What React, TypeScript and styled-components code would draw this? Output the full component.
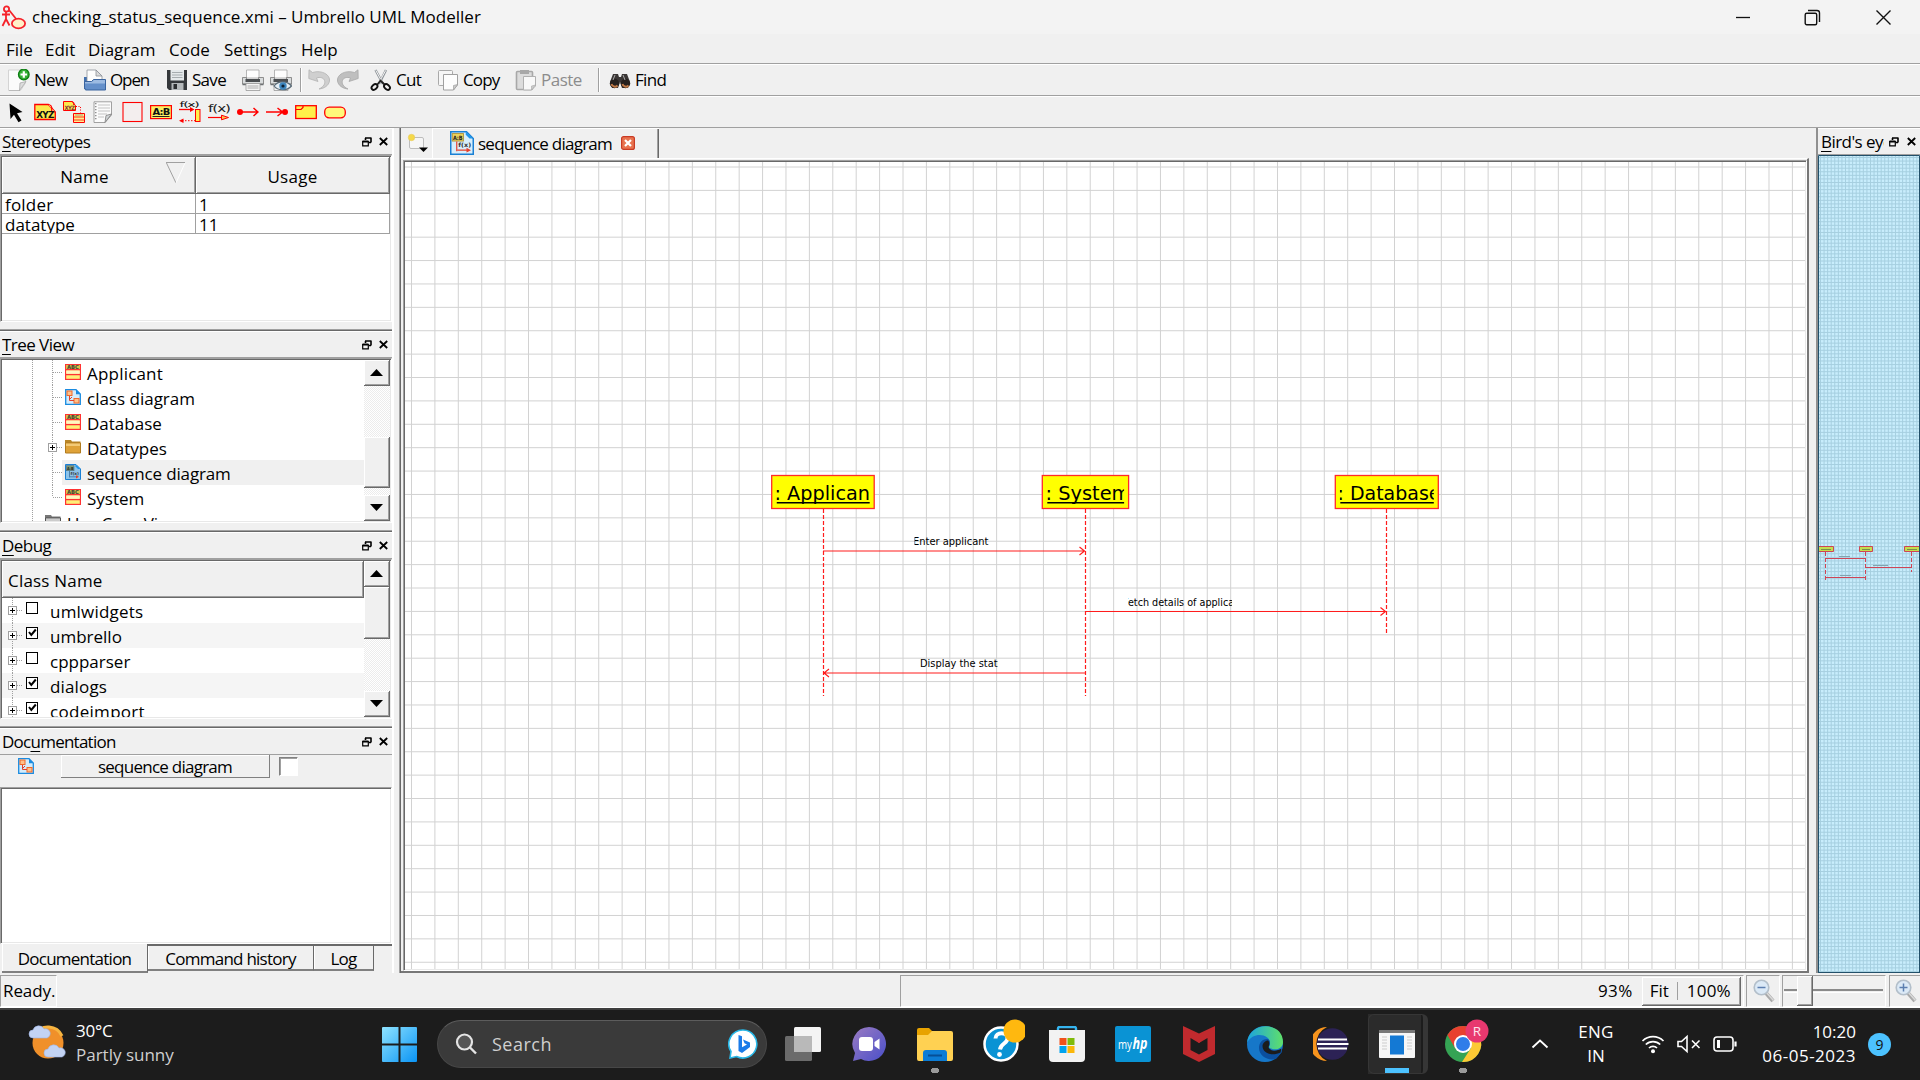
import React from 'react';
import styled, { createGlobalStyle } from 'styled-components';

const Global = createGlobalStyle`
  * { box-sizing: border-box; }
  body { margin: 0; background: #f0f0f0; overflow: hidden; }
  svg { display: block; flex: none; }
`;

const UI = `'Open Sans', 'Noto Sans', 'Liberation Sans', sans-serif`;
const TAHOMA = `'DejaVu Sans Condensed', 'DejaVu Sans', sans-serif`;

const Desktop = styled.div`
  width: 1920px; height: 1080px; display: flex; flex-direction: column;
  font-family: ${UI}; font-size: 17px; line-height: 22px; color: #000;
  background: #f0f0f0; white-space: nowrap; overflow: hidden;
`;
const Label = styled.span<{ ls?: number; size?: number; color?: string }>`
  letter-spacing: ${p => p.ls ?? 0}px;
  font-size: ${p => p.size ?? 17}px;
  color: ${p => p.color ?? 'inherit'};
`;

/* ---------- window chrome ---------- */
const TitleBar = styled.header`
  height: 34px; flex: none; display: flex; align-items: center; background: #f3f3f3; padding-left: 1px;
`;
const TitleText = styled.div`flex: 1; padding-left: 6px;`;
const WinButtons = styled.div`display: flex; gap: 54px; padding-right: 28px;`;
const MenuBar = styled.nav`
  height: 30px; flex: none; display: flex; align-items: center; padding: 2px 0 0 6px;
  border-bottom: 1px solid #a0a0a0;
`;
const MenuItem = styled.div<{ w: number }>`width: ${p => p.w}px;`;
const ToolBar = styled.div`
  height: 32px; flex: none; display: flex; align-items: center; padding-left: 8px;
  border-top: 1px solid #fff; border-bottom: 1px solid #a0a0a0;
`;
const Tool = styled.div<{ w: number; off?: boolean; ls?: number }>`
  width: ${p => p.w}px; flex: none; display: flex; align-items: center; gap: 4px;
  letter-spacing: ${p => p.ls ?? -.7}px;
  color: ${p => (p.off ? '#8c8c8c' : '#000')};
`;
const ToolSep = styled.i<{ w: number }>`
  width: ${p => p.w}px; height: 24px; border-left: 1px solid #a0a0a0; box-shadow: inset 1px 0 #fff;
`;

/* ---------- docks ---------- */
const Body = styled.div`height: 845px; flex: none; display: flex;`;
const LeftDock = styled.aside`width: 392px; flex: none; display: flex; flex-direction: column;`;
const Splitter = styled.i<{ w: number }>`width: ${p => p.w}px; flex: none; border-left: 2px solid #fff;`;
const Panel = styled.section<{ h: number }>`
  height: ${p => p.h}px; flex: none; display: flex; flex-direction: column;
  box-shadow: inset 0 -1px #696969, inset 0 -2px #a0a0a0;
`;
const PanelTitle = styled.div`
  height: 27px; flex: none; display: flex; align-items: center; padding: 1px 4px 0 2px; letter-spacing: -.55px;
  border-bottom: 1px solid #a0a0a0; box-shadow: inset 0 1px #fff;
  span { flex: 1; overflow: hidden; }
  u { text-underline-offset: 3px; text-decoration-thickness: 1px; }
`;
const Sunken = styled.div<{ h: number }>`
  height: ${p => p.h}px; flex: none; background: #fff; padding: 1px; display: flex; overflow: hidden;
  border: 1px solid; border-color: #a0a0a0 #fff #fff #a0a0a0;
  box-shadow: inset 1px 1px #696969, inset -1px -1px #e8e8e8;
`;
const Column = styled.div`flex: 1; min-width: 0; overflow: hidden;`;

const TableRow = styled.div<{ head?: boolean }>`
  display: grid; grid-template-columns: 194px 194px; height: ${p => (p.head ? 37 : 20)}px;
`;
const Th = styled.div`
  background: #f0f0f0; display: flex; align-items: center; justify-content: center; position: relative;
  border-right: 1px solid #696969; border-bottom: 1px solid #696969;
  box-shadow: inset 1px 1px #fff, inset -1px -1px #a0a0a0; padding-top: 3px;
`;
const SortMark = styled.div`position: absolute; right: 9px; top: 5px;`;
const Td = styled.div`
  border-right: 1px solid #a0a0a0; border-bottom: 1px solid #a0a0a0; padding-left: 3px; overflow: hidden;
`;

const TreeList = styled.div`
  padding-left: 30px; height: 161px;
  background-image: repeating-linear-gradient(#a0a0a0 0 1px, transparent 1px 2px);
  background-size: 1px 100%; background-position: 30px 0; background-repeat: no-repeat;
`;
const TreeRow = styled.div<{ selected?: boolean; shift?: boolean }>`
  height: 25px; margin-left: ${p => (p.shift ? 11 : 16)}px; display: flex; align-items: center;
  background: linear-gradient(90deg, #fff 14px, ${p => (p.selected ? '#f0f0f0' : '#fff')} 14px);
  span { padding-top: 2px; }
`;
const Guide = styled.div`width: 15px; flex: none; align-self: stretch;`;
const TreeIcon = styled.div`width: 24px; flex: none; padding: 0 0 1px 2px;`;

const DebugHead = styled.div`
  height: 37px; background: #f0f0f0; padding: 9px 0 0 6px;
  border-right: 1px solid #696969; border-bottom: 1px solid #696969;
  box-shadow: inset 1px 1px #fff, inset -1px -1px #a0a0a0;
`;
const DebugRow = styled.div<{ alt: boolean }>`
  height: 25px; display: flex; background: ${p => (p.alt ? '#f5f5f5' : '#fff')};
  line-height: 28px; padding-left: 6px;
`;

const Bar = styled.div`
  width: 26px; flex: none; display: flex; flex-direction: column;
  background: repeating-conic-gradient(#fff 0 25%, #ececec 0 50%) 0 0 / 2px 2px;
`;
const BarPart = styled.div<{ h: number; gap?: number }>`
  height: ${p => p.h}px; margin-top: ${p => p.gap ?? 0}px; flex: none; background: #f0f0f0;
  display: flex; align-items: center; justify-content: center;
  border-right: 1px solid #696969; border-bottom: 1px solid #696969;
  box-shadow: inset 1px 1px #fff, inset -1px -1px #a0a0a0;
`;

const DocHead = styled.div`height: 32px; flex: none; display: flex; padding-left: 18px;`;
const DocIcon = styled.div`width: 43px; padding-top: 3px;`;
const DocName = styled.div`
  width: 209px; height: 23px; text-align: center; line-height: 23px; letter-spacing: -.75px;
  border-right: 1px solid #808080; border-bottom: 1px solid #808080; box-shadow: inset 1px 1px #fff;
`;
const DocCheck = styled.i`
  margin: 2px 0 0 9px; width: 19px; height: 19px; background: #fff;
  border: 1px solid; border-color: #808080 #fff #fff #808080; box-shadow: inset 1px 1px #a0a0a0;
`;
const DockTabs = styled.div`
  flex: 1; display: flex; align-items: flex-start; padding-left: 2px; letter-spacing: -.75px;
`;
const DockTab = styled.div<{ w: number; on?: boolean }>`
  width: ${p => p.w}px; height: ${p => (p.on ? 29 : 27)}px; text-align: center;
  line-height: ${p => (p.on ? 29 : 25)}px;
  border-right: 1px solid #696969; border-bottom: 2px solid #808080;
  border-top: ${p => (p.on ? 0 : 2)}px solid #696969;
  box-shadow: inset 1px 0 #fff;
`;
const DockTabRest = styled.i`flex: 1; height: 2px; background: #696969;`;

/* ---------- document area ---------- */
const Main = styled.main`
  width: 1410px; flex: none; display: flex; flex-direction: column;
  box-shadow: inset 1px 0 #a0a0a0, inset 2px 0 #696969; padding-left: 2px;
`;
const DocTabs = styled.div`height: 30px; flex: none; display: flex; align-items: center;`;
const NewTab = styled.div`width: 31px; padding-left: 6px;`;
const DocTab = styled.div`
  width: 227px; height: 30px; display: flex; align-items: center; padding: 0 0 0 18px;
  box-shadow: inset 1px 1px #fff, inset -1px 0 #696969, inset -2px 0 #a0a0a0;
`;
const TabText = styled.div`width: 147px; padding: 1px 0 0 4px; letter-spacing: -.75px;`;
const Pane = styled.div`
  flex: 1; padding: 1px 0 0 2px; border-top: 1px solid #fff;
  border-right: 2px solid #777; border-bottom: 2px solid #777;
`;
const BirdDock = styled.aside`
  flex: 1; margin-left: 7px; display: flex; flex-direction: column; border-left: 2px solid #909090;
  ${PanelTitle} { padding-left: 3px; padding-right: 0; }
  ${PanelTitle} span { flex: none; width: 63px; margin-right: 5px; }
`;

/* ---------- status bar ---------- */
const StatusBar = styled.footer`
  height: 35px; flex: none; display: flex; padding-top: 2px; border-bottom: 1px solid #fff; gap: 3px;
`;
const StatusCell = styled.div<{ w: number; gap?: number; pad?: number }>`
  width: ${p => p.w}px; height: 32px; margin-left: ${p => p.gap ?? 0}px; flex: none;
  padding-left: ${p => p.pad ?? 0}px; display: flex; align-items: center;
  border: 1px solid; border-color: #a0a0a0 #fff #fff #a0a0a0;
`;
const ZoomButtons = styled.div`
  width: 99px; height: 29px; margin-left: 9px; display: flex; align-items: center; padding-left: 8px;
  border-right: 1px solid #696969; border-bottom: 1px solid #696969;
  box-shadow: inset 1px 1px #fff, inset -1px -1px #a0a0a0;
  i { width: 1px; height: 18px; margin: 0 9px 0 8px; background: #a0a0a0; }
`;
const Groove = styled.i<{ w: number }>`
  width: ${p => p.w}px; height: 4px; border-top: 2px solid #8a8a8a; border-bottom: 1px solid #fff;
`;
const Handle = styled.i`
  width: 16px; height: 30px; background: #f0f0f0; border-right: 1px solid #696969; border-bottom: 1px solid #696969;
  box-shadow: inset 1px 1px #fff, inset -1px -1px #a0a0a0;
`;

/* ---------- taskbar ---------- */
const TaskBar = styled.div`
  height: 72px; flex: none; background: #1c1c1c; border-top: 2px solid #3e3e3e; color: #fff;
  display: flex; align-items: center; line-height: 24px; padding-bottom: 2px;
`;
const Weather = styled.div`
  width: 382px; flex: none; display: flex; align-items: center; gap: 10px; padding: 0 0 2px 28px;
`;
const Stack = styled.div<{ w?: number; align?: string }>`
  display: flex; flex-direction: column; width: ${p => (p.w ? p.w + 'px' : 'auto')}; text-align: ${p => p.align ?? 'left'};
  padding-bottom: 1px;
`;
const Search = styled.div`
  width: 330px; height: 48px; margin: 0 3px 0 20px; border-radius: 24px; background: #3a3a3a;
  border: 1px solid #474747; border-top-color: #5c5c5c; display: flex; align-items: center; padding: 0 8px 0 17px;
  span { flex: 1; padding-left: 15px; }
`;
const AppSlot = styled.div<{ dot?: boolean }>`
  width: 66px; height: 60px; flex: none; display: flex; align-items: center; justify-content: center;
  background: ${p => (p.dot ? 'radial-gradient(ellipse 4.5px 3px at 33px 56.5px, #9a9a9a 90%, transparent)' : 'none')};
`;
const ActiveApp = styled(AppSlot)`
  background:
    linear-gradient(#4cc2ff, #4cc2ff) 21px 54px / 24px 5px no-repeat,
    linear-gradient(#2b2b2b, #2b2b2b) 4px 0 / 53px 60px no-repeat;
  position: relative;
`;
const StackedEdge = styled.i`
  position: absolute; left: 4px; top: 0; width: 60px; height: 60px; border-radius: 6px;
  border: 1px solid #363636; border-right-width: 5px;
`;
const Tray = styled.div`display: flex; align-items: center; flex: 1; padding-left: 1px;`;
const TrayCell = styled.div<{ w: number; pad?: number }>`width: ${p => p.w}px; padding-left: ${p => p.pad ?? 0}px; flex: none;`;
const Count = styled.div`
  margin-left: 12px; width: 23px; height: 23px; border-radius: 50%; background: #4cc2ff; color: #111;
  text-align: center; line-height: 23px; font-size: 14px;
`;

/* ---------- icons ---------- */
const S = ({ w = 22, h = 22, vb, children }: { w?: number; h?: number; vb?: string; children: React.ReactNode }) => (
  <svg width={w} height={h} viewBox={vb ?? `0 0 ${w} ${h}`} fill="none">{children}</svg>
);
const tiny = { fontFamily: 'DejaVu Sans, sans-serif', fontWeight: 700 } as const;

const Umbrello = () => (
  <S w={25} h={25}>
    <g stroke="#f5222a" strokeWidth="1.8">
      <circle cx="5.500" cy="4" r="2.600" /><path d="M5 7v8M1 9.500h8M5 14l-3.500 7M5 14l3.500 6.500M8 5l8 10" />
      <ellipse cx="17.500" cy="18.500" rx="6.600" ry="4.800" fill="#fff0c8" />
    </g>
  </S>
);
const DockGap = styled.i<{ w: number }>`width: ${p => p.w}px; flex: none;`;
const DockButtons = ({ gap = 7 }: { gap?: number }) => (
  <>
    <S w={10} h={10}><path d="M3.500 3V1M3 1h6M9 .5v5M9 5.500H7" stroke="#000" strokeWidth="1.600" /><path d="M.7 4.500h5.600v4.300H.7z" stroke="#000" strokeWidth="1.200" /><path d="M.5 4.500h6" stroke="#000" strokeWidth="2" /></S>
    <DockGap w={gap} />
    <S w={9} h={9}><path d="M.8 1l7.400 7M8.200 1L.8 8" stroke="#000" strokeWidth="1.800" /></S>
  </>
);
const NewI = () => (
  <S><path d="M.5 1h17v13l-5 7.500H.5z" fill="#fbfbfb" stroke="#d4d4d4" /><path d="M1 21.500h11" stroke="#bbb" /><path d="M18 12.500l-6 1.500-.5 7.500z" fill="#ddd" stroke="#a9a9a9" strokeWidth=".8" />
    <circle cx="15.800" cy="5.500" r="5.300" fill="#35b035" stroke="#0c7d12" strokeWidth="1.300" /><path d="M15.800 2.200v6.600M12.500 5.500h6.600" stroke="#fff" strokeWidth="2.200" /></S>
);
const OpenI = () => (
  <S><path d="M0 8h5v12H0z" fill="#416fae" /><path d="M3 1h9l6 6v8H3z" fill="#fdfdfd" stroke="#8d9299" strokeWidth=".8" /><path d="M12 1v6h6z" fill="#dadada" stroke="#8d9299" strokeWidth=".8" />
    <path d="M.5 18.500V12.500l7 0 2-2h12v10.500H1.500z" fill="#6590ca" stroke="#3a649f" /><path d="M1 13h7l2-2h11v3.500H1z" fill="#9dbbe2" /></S>
);
const SaveI = () => (
  <S><path d="M1 1h20v20H3l-2-2z" fill="#35383b" /><path d="M4.500 1h13.500v10.500H4.500z" fill="#e4e9eb" /><path d="M6 3.500h10.500M6 6h10.500M6 8.500h10.500" stroke="#a5acaf" /><path d="M5.500 14h12v7h-12z" fill="#b4b8ba" /><path d="M7.500 15h3.500v5H7.500z" fill="#2c2e30" /></S>
);
const PrintBase = () => (
  <g><path d="M4.500 1h12.500v8H4.500z" fill="#fdfdfd" stroke="#a5a5a5" strokeWidth=".8" /><path d="M.5 8.500h4v2h12v-2h5V15H.5z" fill="#d9dcdd" stroke="#777" strokeWidth=".8" /><path d="M3.500 10h14.500v3H3.500z" fill="#4b4e51" /><path d="M.5 15.500h21" stroke="#6d7073" strokeWidth="1.500" /><path d="M4 14.500h14v7H4z" fill="#f5f5f5" stroke="#999" strokeWidth=".8" /><path d="M5.500 17h11M5.500 19h11" stroke="#9a9a9a" strokeWidth=".8" /></g>
);
const PrintI = () => <S><PrintBase /></S>;
const PreviewI = () => <S><PrintBase /><path d="M4 17c4-5.500 13-5.500 17.500 0-4.500 5-13.500 5-17.500 0z" fill="#e4eef5" stroke="#5a6a76" strokeWidth="1.200" /><circle cx="13" cy="17" r="3.700" fill="#3c85bd" /><circle cx="13" cy="17" r="1.600" fill="#0d2033" /></S>;
const UndoI = () => <S><path d="M4.500 3.500C14 .5 22.500 6 21.500 12c-.8 4.500-5 7.500-10.500 8 5-2.500 6.500-5.500 5.500-8.500-1-2.800-4.500-3.800-8-2.500l1.500 3.500L.8 9.500 1 .8z" fill="#cfcfcf" stroke="#b2b2b2" strokeWidth=".8" /></S>;
const RedoI = () => <S><path d="M17.500 3.500C8 .5-.5 6 .5 12c.8 4.500 5 7.500 10.500 8-5-2.500-6.500-5.500-5.500-8.500 1-2.800 4.500-3.800 8-2.500L12 12.500l9.200-3L21 .8z" fill="#bfbfbf" stroke="#a8a8a8" strokeWidth=".8" /></S>;
const CutI = () => (
  <S><path d="M5.500 1l7.500 14M16 1L9 15" stroke="#8e9499" strokeWidth="2.400" /><path d="M5.800 1.400l6.500 12M15.700 1.400L9 13.500" stroke="#f4f4f4" strokeWidth="1" /><path d="M7 16l3.500-4.500L15 16" stroke="#222" strokeWidth="1.800" />
    <ellipse cx="4.500" cy="18" rx="3.300" ry="2.300" transform="rotate(-40 4.500 18)" stroke="#111" strokeWidth="1.900" /><ellipse cx="17" cy="18" rx="3.300" ry="2.300" transform="rotate(40 17 18)" stroke="#111" strokeWidth="1.900" /></S>
);
const CopyI = () => (
  <S><rect x="1.500" y="1.500" width="14" height="15" rx="1" fill="#f6f6f6" stroke="#a9a9a9" /><path d="M6.500 5.500h14V16l-4 5H6.500z" fill="#fdfdfd" stroke="#a0a0a0" /><path d="M20.500 15.500l-4 1V21z" fill="#ccc" stroke="#a0a0a0" strokeWidth=".7" /></S>
);
const PasteI = () => (
  <S><rect x="1.500" y="2.500" width="16" height="18" rx="1" fill="#dcdcdc" stroke="#a8a8a8" strokeWidth="1.600" /><path d="M5 1h9v4H5z" fill="#a8a8a8" /><path d="M8.500 7.500h12V17l-4 4h-8z" fill="#f8f8f8" stroke="#b0b0b0" /><path d="M20.500 16l-4 1v4z" fill="#ccc" stroke="#aaa" strokeWidth=".6" /></S>
);
const FindI = () => (
  <S><path d="M4 5h5l1 3h2l1-3h5l3 8-2 6h-6l-2-6-2 6H3l-2-6z" fill="#3a3635" /><circle cx="5.500" cy="14.500" r="4.700" fill="#26211f" /><circle cx="16.500" cy="14.500" r="4.700" fill="#26211f" />
    <path d="M2.500 15a3.500 3.500 0 006 1.500M13.500 15a3.500 3.500 0 006 1.500" stroke="#c07a48" strokeWidth="2" /><path d="M6 6l-2 5M14 6l2 5" stroke="#aaa" /></S>
);
const Pointer = () => <S><path d="M1.500 2.500L14.500 11l-5.500 1.200 4.500 7.300-3 1.700-4.500-7.500L2.500 18z" fill="#000" /></S>;
const ObjI = () => (
  <S><path d="M.8 3.500h13.500l7 7.500v7.500H.8z" fill="#fbe94e" stroke="#f00" strokeWidth="1.300" /><path d="M14 3.500c2 0 5 1.500 3.500 6.500l3.500 1" fill="#fff9b0" stroke="#f00" strokeWidth="1.200" /><text x="11" y="17" fontSize="8.500" textAnchor="middle" textLength="17.500" lengthAdjust="spacingAndGlyphs" fill="#111" {...tiny}>XYZ</text></S>
);
const ObjClassI = () => (
  <S><path d="M.5 .5h8.500l3.500 4v5h-12z" fill="#fbe94e" stroke="#f00" /><path d="M9 .5c2 .5 2.500 2 1.500 3.500" stroke="#f00" /><text x="6.500" y="8.500" fontSize="6" textAnchor="middle" textLength="10" lengthAdjust="spacingAndGlyphs" fill="#833" {...tiny}>XYZ</text>
    <path d="M13 5.500h4.500v6" stroke="#f00" strokeDasharray="1 1.500" /><path d="M10.500 12.500h11v9h-11z" fill="#ffef8e" stroke="#f00" /><path d="M12 14h8" stroke="#a97" /><path d="M10.500 16h11M10.500 19h11" stroke="#f00" strokeWidth=".8" /></S>
);
const NoteI = () => <S><path d="M1 .8h17.500V14l-6.500 7.500H1z" fill="#fbfbfb" stroke="#979797" strokeWidth=".9" /><path d="M5 4h12M5 7h12M5 10h12M5 13h9M5 16h6" stroke="#c3c3c3" /><path d="M2.800 2v18" stroke="#777" strokeWidth="1.200" strokeDasharray="1.200 1.800" /><path d="M18.500 13l-5.500 1.500-1 7z" fill="#d2d6d8" stroke="#888" strokeWidth=".9" /></S>;
const BoxI = () => <S><rect x="1" y="1.500" width="19" height="19" fill="#f3eeee" stroke="#f00" strokeWidth="1.100" /></S>;
const ABI = () => <S><rect x=".6" y="4.600" width="20.800" height="13" fill="#fbee62" stroke="#f00" strokeWidth="1.200" /><text x="11" y="13.800" fontSize="8.500" textAnchor="middle" textLength="17" lengthAdjust="spacingAndGlyphs" fill="#111" {...tiny}>A:B</text><path d="M2.500 15.500h17" stroke="#222" /></S>;
const SyncI = () => (
  <S><text x=".5" y="6" fontSize="7.500" textLength="19" lengthAdjust="spacingAndGlyphs" fill="#111" {...tiny} fontWeight={400}>f(x)</text><path d="M0 8.500h13" stroke="#f00" strokeWidth="1.300" /><path d="M11 6l4.500 2.500-4.500 2.500z" fill="#f00" />
    <rect x="16.500" y="8.500" width="4.500" height="12" fill="#fff04a" stroke="#f00" /><path d="M3 19.700h13" stroke="#f00" strokeDasharray="1.500 1.500" /><path d="M4.500 17.500L0 19.700 4.500 22z" fill="#f00" /></S>
);
const AsyncI = () => <S><text x="0" y="10.500" fontSize="10" textLength="22" lengthAdjust="spacingAndGlyphs" fill="#222" {...tiny} fontWeight={400}>f(x)</text><path d="M0 16.500h14" stroke="#f00" strokeWidth="1.200" /><path d="M13.500 14.200l7 2.300-7 2.300z" fill="#fbc04e" stroke="#f00" /></S>;
const FoundI = () => <S><circle cx="3" cy="11" r="3" fill="#f00" /><path d="M3 11h18M16.500 7l4.500 4-4.500 4" stroke="#f00" strokeWidth="1.500" /></S>;
const LostI = () => <S><circle cx="19" cy="11" r="3" fill="#f00" /><path d="M0 11h16.500M11.500 7l5 4-5 4" stroke="#f00" strokeWidth="1.500" /></S>;
const FragI = () => <S><rect x=".7" y="4.700" width="20.600" height="12.800" fill="#fff04a" stroke="#f00" strokeWidth="1.300" /><path d="M1 8.500h5l2-2V5" stroke="#f00" strokeWidth="1.200" /></S>;
const PrecI = () => <S><rect x=".7" y="6.200" width="20.600" height="10.600" rx="4.500" fill="#fff97a" stroke="#f00" strokeWidth="1.300" /></S>;

const ClassI = () => (
  <S w={16} h={16}><rect x=".6" y=".6" width="14.800" height="14.800" fill="#ffee77" stroke="#f33" strokeWidth="1.200" /><path d="M1 1h14v4H1z" fill="#d7c24c" /><path d="M0 5.700h16M0 10.500h16" stroke="#f33" strokeWidth="1.400" /><path d="M1.300 6.500h13.400v3.300H1.300z" fill="#fff6c0" /><text x="8" y="5" fontSize="5.500" textAnchor="middle" textLength="12" lengthAdjust="spacingAndGlyphs" fill="#443" {...tiny}>ABC</text></S>
);
const ClassDiaI = () => (
  <S w={16} h={16}><path d="M.7.7H11l4.300 4.300v10.300H.7z" fill="#d4ecfb" stroke="#1a8be0" strokeWidth="1.300" /><path d="M11 .7v4.500h4.500z" fill="#1a8be0" /><rect x="2" y="2" width="5" height="4.500" fill="#ffc18a" stroke="#f0682b" /><rect x="9" y="9.500" width="5" height="4.500" fill="#ffc18a" stroke="#f0682b" /><path d="M4.500 7v4.500H9M7 8l-2 2" stroke="#e3402b" /></S>
);
const SeqDiaI = ({ s = 16, dim }: { s?: number; dim?: boolean }) => (
  <S w={s} h={s} vb="0 0 16 16"><path d="M.5.5H11L15.500 5v10.500H.5z" fill={dim ? '#8cc3ea' : '#d8eefb'} stroke="#1a80d4" /><path d="M10.500.5v2L13 5h2.500z" fill="#1f96ea" /><rect x="1.500" y="1.700" width="7.500" height="5" fill={dim ? '#7f9a70' : '#ecd25a'} stroke={dim ? '#4b6b80' : '#b0923a'} strokeWidth=".6" />
    <text x="5.200" y="5.700" fontSize="4" textAnchor="middle" textLength="6.500" lengthAdjust="spacingAndGlyphs" fill="#222" {...tiny}>A:B</text><path d="M4.500 7v6.500M5 12.800h7" stroke={dim ? '#3b6e9e' : '#e8402b'} strokeWidth=".8" /><path d="M11 11.200l3 1.600-3 1.600z" fill="#e8402b" /><text x="9.800" y="10.800" fontSize="4" textAnchor="middle" textLength="8.500" lengthAdjust="spacingAndGlyphs" fill="#333" {...tiny}>f(x)</text></S>
);
const FolderI = ({ gray }: { gray?: boolean }) => (
  <S w={16} h={16}><path d="M0 1h6l1 1.500h8.500V6H0z" fill={gray ? '#777' : '#b98628'} /><path d="M.5 4h15v10H.5z" fill={gray ? '#999' : '#dfa238'} stroke={gray ? '#555' : '#b07b1f'} /><path d="M1 4.500h14v2.500H1z" fill={gray ? '#ccc' : '#f3ca76'} /></S>
);
const Lines = ({ plus, last }: { plus?: boolean; last?: boolean }) => (
  <S w={15} h={25}>
    <path d={last ? 'M4.500 0v12' : 'M4.500 0v25'} stroke="#a0a0a0" strokeDasharray="1 1" /><path d="M5 12.500h9" stroke="#a0a0a0" strokeDasharray="1 1" />
    {plus && <><rect x=".5" y="8.500" width="8" height="8" fill="#fff" stroke="#a0a0a0" /><path d="M2 12.500h5M4.500 10v5" stroke="#000" /></>}
  </S>
);
const Check = ({ on }: { on: boolean }) => (
  <S w={27} h={25}><rect x="3.500" y="4.500" width="11" height="11" fill="#fff" stroke="#000" />{on && <path d="M6 9l2.300 3 4.500-5.500" stroke="#000" strokeWidth="2" />}</S>
);
const Tri = ({ up }: { up?: boolean }) => <S w={13} h={7}><path d={up ? 'M0 7h13L6.500 0z' : 'M0 0h13L6.500 7z'} fill="#000" /></S>;

const Lens = ({ plus }: { plus?: boolean }) => (
  <S w={23} h={24}><path d="M13 14l7 8" stroke="#a9a9a9" strokeWidth="4" /><path d="M13.500 13.500l7 8" stroke="#dadada" strokeWidth="1.500" /><circle cx="8.500" cy="8.500" r="7.300" fill="#dbe9f6" stroke="#b3bfca" strokeWidth="1.600" /><path d={plus ? 'M4.500 8.500h8M8.500 4.500v8' : 'M4.500 8.500h8'} stroke="#5c7fb0" strokeWidth="1.500" /></S>
);

/* ---------- sequence diagram ---------- */
const STEP = 23.405;
const LifeBox = ({ x, w, tx, tw, text }: { x: number; w: number; tx: number; tw: number; text: string }) => (
  <g>
    <rect x={x} y="475.500" width={w} height="33" fill="#ff0" stroke="#ff2a2a" strokeWidth="1.300" />
    <clipPath id={`clip${x}`}><rect x={x + 4.500} y="476" width={w - 9} height="32" /></clipPath>
    <g clipPath={`url(#clip${x})`}>
      <text x={tx} y="500.300" fontFamily={TAHOMA} fontSize="20" textLength={tw} lengthAdjust="spacingAndGlyphs" fill="#000">{text}</text>
      <path d={`M${x + 5} 502.700h${w}`} stroke="#000" strokeWidth="1.600" />
    </g>
  </g>
);
const Note = ({ x, w, y, dx, tw, text }: { x: number; w: number; y: number; dx: number; tw: number; text: string }) => (
  <g>
    <clipPath id={`n${y}`}><rect x={x} y={y - 12} width={w} height="16" /></clipPath>
    <text clipPath={`url(#n${y})`} x={x + dx} y={y} textLength={tw} lengthAdjust="spacingAndGlyphs" fontFamily={TAHOMA} fontSize="10.500" fill="#000">{text}</text>
  </g>
);
const Diagram = () => (
  <svg width="1400" height="807" viewBox="405 162 1400 807" fill="none">
    <g stroke="#d2d2d2" strokeWidth="1">
      {Array.from({ length: 60 }, (_, i) => <path key={`v${i}`} d={`M${(411.5 + i * STEP).toFixed(2)} 162v807`} />)}
      {Array.from({ length: 35 }, (_, i) => <path key={`h${i}`} d={`M405 ${(167 + i * 23.39).toFixed(2)}h1400`} />)}
    </g>
    <g stroke="#ff1c1c" strokeWidth="1.200">
      <path d="M823.500 509v187M1085.500 509v187M1386.500 509v125" strokeDasharray="4 2" />
      <path d="M823 551h261M1079.500 547l5 4-5 4M1085 611.500h301M1380.500 607.500l5 4-5 4M1085 673H824M829 669l-5 4 5 4" />
    </g>
    <LifeBox x={771.700} w={102.500} tx={774.500} tw={103} text=": Applicant" />
    <LifeBox x={1042.300} w={86.300} tx={1045.500} tw={85} text=": System" />
    <LifeBox x={1335.300} w={103} tx={1337.500} tw={103} text=": Database" />
    <Note x={914.500} w={75} y={545} dx={-1.500} tw={75.500} text="Enter applicant" />
    <Note x={1128} w={104} y={606} dx={-5} tw={121} text="Fetch details of applicant" />
    <Note x={920} w={78} y={667} dx={0} tw={89} text="Display the status" />
  </svg>
);
const Bird = () => (
  <svg width="102" height="818" viewBox="1818 155 102 818" fill="none">
    <path d="M1818 155h102v818h-102z" fill="#c8edfc" />
    <g stroke="#a6cfe0" strokeWidth="1">
      {Array.from({ length: 28 }, (_, i) => <path key={`v${i}`} d={`M${(1820.500 + i * 3.570).toFixed(2)} 155v818`} />)}
      {Array.from({ length: 229 }, (_, i) => <path key={`h${i}`} d={`M1818 ${(157.500 + i * 3.570).toFixed(2)}h102`} />)}
    </g>
    <g stroke="#cf4455">
      <path d="M1825.500 552v28M1865.500 552v28M1911.500 552v20" strokeDasharray="4 2" />
      <path d="M1825.500 558.500h40M1865.500 567.500h46M1825.500 577.500h40" />
      <g fill="#c3de4e"><path d="M1818.500 546.500h15v5h-15zM1859.500 546.500h13v5h-13zM1904.500 546.500h15v5h-15z" /></g>
    </g>
    <path d="M1821 549.500h10M1862 549.500h8M1907 549.500h10" stroke="#7c8c4a" />
    <path d="M1839 556.500h11M1873 565.500h15M1840 575.500h11" stroke="#83a3ae" />
    <path d="M1818.500 973V155.500h101V973M1818 972.500h102" stroke="#22506a" />
  </svg>
);

/* ---------- taskbar icons ---------- */
const Cloud = ({ x, y }: { x: number; y: number }) => <path transform={`translate(${x} ${y})`} d="M4 13a4 4 0 010-8 6 6 0 0111-1 4.600 4.600 0 013 9z" fill="#c3d3f3" stroke="#9db4e4" strokeWidth=".6" />;
const WeatherI = () => <S w={38} h={36}><circle cx="20" cy="18" r="15.500" fill="#f0902a" /><path d="M7 9a15.500 15.500 0 0127 2" stroke="#f6b440" strokeWidth="3" /><Cloud x={1} y={0} /><Cloud x={16} y={19} /></S>;
const WinI = () => <S w={35} h={35}><defs><linearGradient id="wg" x1="0" y1="0" x2="35" y2="35" gradientUnits="userSpaceOnUse"><stop stopColor="#8fe3ff" /><stop offset="1" stopColor="#0a94f5" /></linearGradient></defs><path d="M0 1a1 1 0 011-1h15.500v16.500H0zM18.500 0H34a1 1 0 011 1v15.500H18.500zM0 18.500h16.500V35H1a1 1 0 01-1-1zM18.500 18.500H35V34a1 1 0 01-1 1H18.500z" fill="url(#wg)" /></S>;
const SearchI = () => <S w={22} h={22}><circle cx="9.500" cy="9" r="7.500" stroke="#e4e4e4" strokeWidth="2.200" fill="#555" /><path d="M15 14.500l6 6" stroke="#e4e4e4" strokeWidth="2.400" /></S>;
const BingI = () => <S w={30} h={30}><path d="M15 1a14 14 0 11-6.500 26.500L2 29l1-6.500A14 14 0 0115 1z" fill="#fff" stroke="#28b8e8" strokeWidth="1.600" /><path d="M10.500 6l3.500 1.300v11l5-2.800-2.500-1.200-1.500-3.800 7 3v4.500L14 24l-3.500-2z" fill="#1a7be8" /></S>;
const TaskViewI = () => <S w={36} h={34}><rect x="0" y="9" width="27" height="25" rx="1.500" fill="#6b6b6b" /><rect x="9" y="0" width="27" height="25" rx="1.500" fill="#f4f4f4" /><path d="M9 9h18v16H9z" fill="#b9b9b9" /></S>;
const MeetI = () => <S w={34} h={35}><defs><linearGradient id="mg" x1="0" y1="0" x2="34" y2="34" gradientUnits="userSpaceOnUse"><stop stopColor="#9b7cc2" /><stop offset="1" stopColor="#4a4fc9" /></linearGradient></defs><path d="M17 0a17 17 0 11-8 32l-8 2 2-8A17 17 0 0117 0z" fill="url(#mg)" /><rect x="7" y="10" width="14" height="14" rx="3" fill="#fff" /><path d="M22.500 15l5-3.500v11l-5-3.500z" fill="#fff" /></S>;
const ExplorerI = () => <S w={36} h={34}><path d="M0 3a2 2 0 012-2h10l4 4-3 5H0z" fill="#e8a300" /><path d="M2 8h9l4-4h19a2 2 0 012 2v26a2 2 0 01-2 2H2a2 2 0 01-2-2V8z" fill="#ffd152" /><path d="M6 34V26a3 3 0 013-3h18a3 3 0 013 3v8z" fill="#0c7cd5" /><path d="M11 28.500h14" stroke="#064f96" strokeWidth="2" /></S>;
const HelpI = () => <svg width="48" height="52" viewBox="-6 -8 48 52" fill="none"><circle cx="18" cy="18" r="16.500" fill="#0a93d4" stroke="#fff" strokeWidth="2.500" /><path d="M12.500 12.500c0-7 12-7 12 0 0 5-7 5-7.500 11" stroke="#fff" strokeWidth="4" /><circle cx="16.500" cy="28.500" r="2.400" fill="#fff" /><circle cx="32" cy="5" r="11.500" fill="#ffb80f" /></svg>;
const StoreI = () => <S w={36} h={36}><path d="M9 5V2.500A1.500 1.500 0 0110.500 1h15A1.500 1.500 0 0127 2.500V5" stroke="#35b4ef" strokeWidth="2.400" /><path d="M0 4h36v28a4 4 0 01-4 4H4a4 4 0 01-4-4z" fill="#f2f2f2" /><path d="M10.500 12h7v7h-7z" fill="#f1511b" /><path d="M18.500 12h7v7h-7z" fill="#80bb0a" /><path d="M10.500 20h7v7h-7z" fill="#00a3ee" /><path d="M18.500 20h7v7h-7z" fill="#fbb70a" /></S>;
const HpI = () => <S w={36} h={36}><rect width="36" height="36" rx="2" fill="#0a93d4" /><text x="3" y="22.500" fontFamily="Open Sans, sans-serif" fontSize="12" textLength="14" lengthAdjust="spacingAndGlyphs" fill="#fff">my</text><text x="17.500" y="22.500" fontFamily="Open Sans, sans-serif" fontSize="16" fontStyle="italic" fontWeight="700" textLength="15" lengthAdjust="spacingAndGlyphs" fill="#fff">hp</text></S>;
const McI = () => <S w={32} h={36}><path d="M0 0l16 7.500L32 0v28l-16 8-16-8z" fill="#c12a2e" /><path d="M7.500 12l8.500 5 8.500-5v12l-8.500 4.500L7.500 24z" fill="#1c1c1c" /><path d="M7 8l9 9 9-9z" fill="#c12a2e" /></S>;
const EdgeI = () => <S w={36} h={36}><defs><linearGradient id="eg" x1="0" y1="10" x2="36" y2="10" gradientUnits="userSpaceOnUse"><stop stopColor="#1ba3e0" /><stop offset="1" stopColor="#5fe06a" /></linearGradient></defs><circle cx="18" cy="18" r="18" fill="#1677c9" /><path d="M0 17C2-5 36-5 36 16c0 7-8 9-13 6-2-1 0-2 0-5 0-9-17-12-23 0z" fill="url(#eg)" /><path d="M12 22c0-5 3-9 8-9 2 0 3 2 3 4 0 3-2 4-1 5 3 4 9 3 12 1l1 3-6 7c-8 2-17-3-17-11z" fill="#0b4f9e" /><path d="M15.500 20c0-3 3-5.500 5.500-5.500 2 1.500 1 5 .5 6.500.5 4 8 5 13 1.500l-1 4c-8 4-18 1-18-6.500z" fill="#1c1c1c" /></S>;
const EclipseI = () => <S w={36} h={34}><path d="M14 0a17 17 0 000 34 19 19 0 010-34z" fill="#f7941e" /><circle cx="19.500" cy="17" r="15.800" fill="#2c2255" /><path d="M5 12.500h29M4 17h31.500M5 21.500h29" stroke="#fff" strokeWidth="1.800" /></S>;
const WindowI = () => <S w={36} h={28}><rect width="36" height="28" rx="1" fill="#f6f6f6" /><path d="M0 0h36v3H0z" fill="#777" /><rect x="11" y="5.500" width="14" height="19" fill="#1479d4" /><path d="M3 7h5M3 10h5M3 13h5M3 16h5M3 19h5M28 7h5M28 10h5M28 13h5M28 16h5M28 19h5" stroke="#ccc" /></S>;
const ChromeI = () => (
  <svg width="52" height="52" viewBox="-8 -8 52 52" fill="none"><circle cx="18" cy="18" r="18" fill="#35a354" /><path d="M2.400 9A18 18 0 0133.600 9L34 10H18l-8 12z" fill="#e8402f" /><path d="M34 9.500A18 18 0 0117 36l9-14-2-12z" fill="#fcc934" /><circle cx="18" cy="18" r="9" fill="#fff" /><circle cx="18" cy="18" r="7" fill="#2f7de9" />
    <circle cx="32" cy="5" r="11.500" fill="#e8386f" /><text x="32" y="10" fontFamily="Open Sans, sans-serif" fontSize="13.500" textAnchor="middle" fill="#ffe3ec">R</text></svg>
);
const Wifi = () => <S w={24} h={20}><path d="M1.500 7a15 15 0 0121 0M4.800 10.500a10.300 10.300 0 0114.400 0M8 14a5.700 5.700 0 018 0" stroke="#fff" strokeWidth="1.700" /><circle cx="12" cy="17.300" r="2" fill="#fff" /></S>;
const Mute = () => <S w={24} h={20}><path d="M1 7.500h3.500L10 2.500v15l-5.500-5H1zM15 6.500l7.500 7.500M22.500 6.500L15 14" stroke="#fff" strokeWidth="1.600" /></S>;
const Battery = () => <S w={25} h={20}><rect x="1" y="3" width="19" height="14" rx="3" stroke="#fff" strokeWidth="1.600" /><path d="M4 6h3v8H4z" fill="#fff" /><path d="M22.500 7.500v5" stroke="#fff" strokeWidth="2.200" /></S>;

const MENU: [string, number][] = [['File', 39], ['Edit', 43], ['Diagram', 81], ['Code', 55], ['Settings', 77], ['Help', 50]];
const SHAPES: [React.FC, number][] = [[Pointer, 26], [ObjI, 29], [ObjClassI, 29.500], [NoteI, 29], [BoxI, 28.500], [ABI, 29], [SyncI, 29], [AsyncI, 29], [FoundI, 29], [LostI, 29], [FragI, 29], [PrecI, 29]];
const CLASSES: [string, boolean, number][] = [['umlwidgets', false, .2], ['umbrello', true, 0], ['cppparser', false, 0], ['dialogs', true, .15], ['codeimport', true, .3]];

export default function App() {
  return (
    <Desktop>
      <Global />
      <TitleBar>
        <Umbrello />
        <TitleText><Label>checking_status_sequence.xmi – Umbrello UML Modeller</Label></TitleText>
        <WinButtons>
          <S w={17} h={17}><path d="M3 8.500h15" stroke="#111" strokeWidth="1.300" /></S>
          <S w={17} h={17}><rect x="1.200" y="4.200" width="11.500" height="11.500" rx="1.500" stroke="#111" strokeWidth="1.400" /><path d="M4 1.500h9a2.500 2.500 0 012.500 2.500v9" stroke="#111" strokeWidth="1.400" /></S>
          <S w={17} h={17}><path d="M1.500 1.500l14 14M15.500 1.500l-14 14" stroke="#111" strokeWidth="1.400" /></S>
        </WinButtons>
      </TitleBar>
      <MenuBar>{MENU.map(([t, w]) => <MenuItem key={t} w={w}>{t}</MenuItem>)}</MenuBar>
      <ToolBar>
        <Tool w={76}><NewI />New</Tool>
        <Tool w={82} ls={-1.100}><OpenI />Open</Tool>
        <Tool w={76}><SaveI />Save</Tool>
        <Tool w={28}><PrintI /></Tool>
        <Tool w={30}><PreviewI /></Tool>
        <ToolSep w={8} />
        <Tool w={29}><UndoI /></Tool>
        <Tool w={33}><RedoI /></Tool>
        <Tool w={67}><CutI />Cut</Tool>
        <Tool w={78} ls={-.9}><CopyI />Copy</Tool>
        <Tool w={83} off ls={-.5}><PasteI />Paste</Tool>
        <ToolSep w={11} />
        <Tool w={70}><FindI />Find</Tool>
      </ToolBar>
      <ToolBar>{SHAPES.map(([Icon, w], i) => <Tool key={i} w={w}><Icon /></Tool>)}</ToolBar>

      <Body>
        <LeftDock>
          <Panel h={203}>
            <PanelTitle><span><u>S</u>tereotypes</span><DockButtons /></PanelTitle>
            <Sunken h={167}>
              <Column>
                <TableRow head>
                  <Th><Label ls={.2}>Name</Label><DockGap w={28} />
                    <SortMark><S w={20} h={22}><path d="M0 .5h19M.5 1L10 21" stroke="#a0a0a0" /><path d="M19 1l-9 20" stroke="#fff" /></S></SortMark>
                  </Th>
                  <Th><Label ls={.3}>Usage</Label></Th>
                </TableRow>
                <TableRow><Td><Label ls={.2}>folder</Label></Td><Td><Label>1</Label></Td></TableRow>
                <TableRow><Td><Label>datatype</Label></Td><Td><Label>11</Label></Td></TableRow>
              </Column>
            </Sunken>
          </Panel>

          <Panel h={201}>
            <PanelTitle><span><u>T</u>ree View</span><DockButtons /></PanelTitle>
            <Sunken h={165}>
              <Column>
                <TreeList>
                  <TreeRow><Guide><Lines /></Guide><TreeIcon><ClassI /></TreeIcon><Label ls={.2}>Applicant</Label></TreeRow>
                  <TreeRow><Guide><Lines /></Guide><TreeIcon><ClassDiaI /></TreeIcon><Label>class diagram</Label></TreeRow>
                  <TreeRow><Guide><Lines /></Guide><TreeIcon><ClassI /></TreeIcon><Label>Database</Label></TreeRow>
                  <TreeRow><Guide><Lines plus /></Guide><TreeIcon><FolderI /></TreeIcon><Label>Datatypes</Label></TreeRow>
                  <TreeRow selected><Guide><Lines /></Guide><TreeIcon><SeqDiaI dim /></TreeIcon><Label ls={-.15}>sequence diagram</Label></TreeRow>
                  <TreeRow><Guide><Lines last /></Guide><TreeIcon><ClassI /></TreeIcon><Label>System</Label></TreeRow>
                  <TreeRow shift><TreeIcon><FolderI gray /></TreeIcon><Label>Use Case View</Label></TreeRow>
                </TreeList>
              </Column>
              <Bar><BarPart h={26}><Tri up /></BarPart><BarPart h={51} gap={51} /><BarPart h={26} gap={7}><Tri /></BarPart></Bar>
            </Sunken>
          </Panel>

          <Panel h={196}>
            <PanelTitle><span><u>D</u>ebug</span><DockButtons /></PanelTitle>
            <Sunken h={160}>
              <Column>
                <DebugHead><Label ls={.2}>Class Name</Label></DebugHead>
                {CLASSES.map(([name, on, ls], i) => (
                  <DebugRow key={name} alt={i % 2 === 1}>
                    <Lines plus /><Check on={on} /><Label ls={ls}>{name}</Label>
                  </DebugRow>
                ))}
              </Column>
              <Bar><BarPart h={26}><Tri up /></BarPart><BarPart h={52} /><BarPart h={26} gap={52}><Tri /></BarPart></Bar>
            </Sunken>
          </Panel>

          <PanelTitle><span><Label ls={-.75}>Doc<u>u</u>mentation</Label></span><DockButtons /></PanelTitle>
          <DocHead>
            <DocIcon><ClassDiaI /></DocIcon>
            <DocName>sequence diagram</DocName>
            <DocCheck />
          </DocHead>
          <Sunken h={157} />
          <DockTabs>
            <DockTab w={146} on>Documentation</DockTab>
            <DockTab w={166}>Command history</DockTab>
            <DockTab w={60}>Log</DockTab>
            <DockTabRest />
          </DockTabs>
        </LeftDock>
        <Splitter w={7} />

        <Main>
          <DocTabs>
            <NewTab>
              <S w={22} h={22}><rect x="2.500" y="5.500" width="14" height="11" rx="1.500" fill="#f6f6f6" stroke="#bdbdbd" /><circle cx="4.500" cy="5.500" r="3.200" fill="#f5d94a" stroke="#e8c95a" strokeWidth=".6" /><path d="M12 15.500h9l-4.500 4.500z" fill="#000" /></S>
            </NewTab>
            <DocTab>
              <SeqDiaI s={24} />
              <TabText>sequence diagram</TabText>
              <S w={14} h={14}><rect x=".6" y=".6" width="12.800" height="12.800" rx="2" fill="#e8734f" stroke="#c93a24" strokeWidth="1.200" /><path d="M4 4l6 6M10 4l-6 6" stroke="#fff" strokeWidth="2.200" /></S>
            </DocTab>
          </DocTabs>
          <Pane><Sunken h={811}><Diagram /></Sunken></Pane>
        </Main>

        <BirdDock>
          <PanelTitle><span><u>B</u>ird's eye view</span><DockButtons gap={8} /></PanelTitle>
          <Bird />
        </BirdDock>
      </Body>

      <StatusBar>
        <StatusCell w={57} pad={2}><Label ls={-.1}>Ready.</Label></StatusCell>
        <StatusCell w={844} gap={840} pad={697}>
          <Label ls={.4}>93%</Label>
          <ZoomButtons>Fit<i /><Label ls={.2}>100%</Label></ZoomButtons>
        </StatusCell>
        <StatusCell w={34} gap={-1} pad={6}><Lens /></StatusCell>
        <StatusCell w={104} gap={-1} pad={1}><Groove w={13} /><Handle /><Groove w={70} /></StatusCell>
        <StatusCell w={40} pad={5}><Lens plus /></StatusCell>
      </StatusBar>

      <TaskBar>
        <Weather>
          <WeatherI />
          <Stack><Label ls={-.2}>30°C</Label><Label color="#cfcfcf">Partly sunny</Label></Stack>
        </Weather>
        <WinI />
        <Search><SearchI /><Label size={18} ls={.5} color="#cfcfcf">Search</Label><BingI /></Search>
        <AppSlot><TaskViewI /></AppSlot>
        <AppSlot><MeetI /></AppSlot>
        <AppSlot dot><ExplorerI /></AppSlot>
        <AppSlot><HelpI /></AppSlot>
        <AppSlot><StoreI /></AppSlot>
        <AppSlot><HpI /></AppSlot>
        <AppSlot><McI /></AppSlot>
        <AppSlot><EdgeI /></AppSlot>
        <AppSlot><EclipseI /></AppSlot>
        <ActiveApp><StackedEdge /><WindowI /></ActiveApp>
        <AppSlot dot><ChromeI /></AppSlot>
        <Tray>
          <TrayCell w={74} pad={34}><S w={18} h={10}><path d="M1.500 8.500L9 1.500l7.500 7" stroke="#fff" strokeWidth="1.800" /></S></TrayCell>
          <Stack w={50} align="center"><Label ls={.3}>ENG</Label><Label>IN</Label></Stack>
          <TrayCell w={36} pad={20}><Wifi /></TrayCell>
          <TrayCell w={36} pad={20}><Mute /></TrayCell>
          <TrayCell w={49} pad={20}><Battery /></TrayCell>
          <Stack w={114} align="right"><Label>10:20</Label><Label ls={.5}>06-05-2023</Label></Stack>
          <Count>9</Count>
        </Tray>
      </TaskBar>
    </Desktop>
  );
}
